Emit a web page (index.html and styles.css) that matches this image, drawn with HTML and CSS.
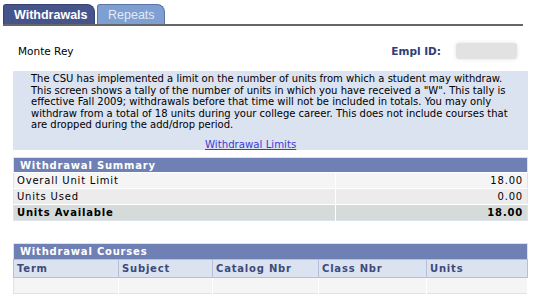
FILE: index.html
```html
<!DOCTYPE html>
<html lang="en">

<head>
    <meta charset="UTF-8">
    <title>Withdrawals</title>
    <link rel="stylesheet" href="styles.css">
</head>

<body>
    <div class="tabs">
        <div class="tab active">Withdrawals</div>
        <div class="tab">Repeats</div>
    </div>

    <div class="student">
        <span class="name">Monte Rey</span>
        <span class="empl-label">Empl ID:</span>
        <span class="empl-id"></span>
    </div>

    <div class="info">
        <p>
            The CSU has implemented a limit on the number of units from which a student may withdraw.<br>
            This screen shows a tally of the number of units in which you have received a "W". This tally is<br>
            effective Fall 2009; withdrawals before that time will not be included in totals. You may only<br>
            withdraw from a total of 18 units during your college career. This does not include courses that<br>
            are dropped during the add/drop period.
        </p>
        <a href="#" class="limits">Withdrawal Limits</a>
    </div>

    <table class="grid summary">
        <tr>
            <th colspan="2" class="title">Withdrawal Summary</th>
        </tr>
        <tr class="row1">
            <td>Overall Unit Limit</td>
            <td class="num">18.00</td>
        </tr>
        <tr class="row2">
            <td>Units Used</td>
            <td class="num">0.00</td>
        </tr>
        <tr class="total">
            <td>Units Available</td>
            <td class="num">18.00</td>
        </tr>
    </table>

    <table class="grid courses">
        <tr>
            <th colspan="5" class="title">Withdrawal Courses</th>
        </tr>
        <tr class="heads">
            <th class="c1">Term</th>
            <th class="c2">Subject</th>
            <th class="c3">Catalog Nbr</th>
            <th class="c4">Class Nbr</th>
            <th>Units</th>
        </tr>
        <tr class="row1 empty">
            <td></td>
            <td></td>
            <td></td>
            <td></td>
            <td></td>
        </tr>
    </table>
</body>

</html>
```

FILE: styles.css
```css
* {
    box-sizing: border-box;
    margin: 0;
    padding: 0;
}

body {
    width: 540px;
    height: 303px;
    background: white;
    font-family: "DejaVu Sans", Verdana, sans-serif;
    font-size: 10px;
    color: #000;
    overflow: hidden;
}

.tabs {
    display: flex;
    gap: 2px;
    width: 520px;
    margin-left: 3px;
    padding-top: 4px;
    border-bottom: 2px solid #666;
}

.tab {
    height: 20px;
    padding: 0 13px 0 10px;
    line-height: 20px;
    font-family: "Liberation Sans", Arial, sans-serif;
    font-size: 12.5px;
    color: #e4eaf4;
    background: #7e9fd2;
    border: 1px solid #5d76a8;
    border-bottom: none;
    border-radius: 3px 8px 0 0;
}

.tab.active {
    width: 92px;
    font-weight: bold;
    color: white;
    background: #46548c;
    border-color: #36426f;
}

.tab:not(.active) {
    width: 68px;
}

.student {
    display: flex;
    align-items: center;
    height: 34px;
    margin-top: 8px;
    padding-left: 18px;
    font-size: 10.5px;
}

.name {
    flex: 1;
}

.empl-label {
    font-weight: bold;
    color: #2f3d78;
    margin-right: 15px;
}

.empl-id {
    width: 61px;
    height: 16px;
    margin-right: 23px;
    background: #e2e2e2;
    border-radius: 3px;
    box-shadow: 0 0 4px #e2e2e2;
}

.info {
    margin: 3px 12px 0 13px;
    height: 79px;
    padding: 2px 0 0 18px;
    background: #dbe2f0;
    font-size: 10px;
    line-height: 11.6px;
}

.limits {
    display: block;
    margin: 8px 0 0 174px;
    color: #3b3bcf;
    font-size: 10.2px;
}

.grid {
    width: 515px;
    margin-left: 13px;
    border-collapse: collapse;
    border: 1px solid #dde3ec;
    font-size: 10px;
    letter-spacing: 0.8px;
}

.summary {
    margin-top: 7px;
}

.courses {
    margin-top: 22px;
}

.grid td,
.grid th {
    text-align: left;
    white-space: nowrap;
}

.title {
    height: 15px;
    padding: 0 0 0 6px;
    background: #6f80b4;
    color: white;
    font-weight: bold;
}

.summary td {
    height: 16px;
    padding: 0 4px 0 3px;
    border-top: 1px solid #fff;
}

.summary td:first-child {
    width: 322px;
    border-right: 1px solid #fff;
}

.row1 td {
    background: #f5f5f5;
}

.row2 td {
    background: #ececec;
}

.total td {
    background: #d5dbd8;
    font-weight: bold;
}

.num {
    text-align: right !important;
}

.courses .title {
    height: 16px;
}

.heads th {
    height: 18px;
    padding: 0 3px;
    background: #dbe2f0;
    color: #3e4a7c;
    font-weight: bold;
    border: 1px solid #b4c0da;
}

.c1 {
    width: 105px;
}

.c2 {
    width: 94px;
}

.c3 {
    width: 106px;
}

.c4 {
    width: 108px;
}

.empty td {
    height: 16px;
    border-right: 1px solid #fff;
}
```
